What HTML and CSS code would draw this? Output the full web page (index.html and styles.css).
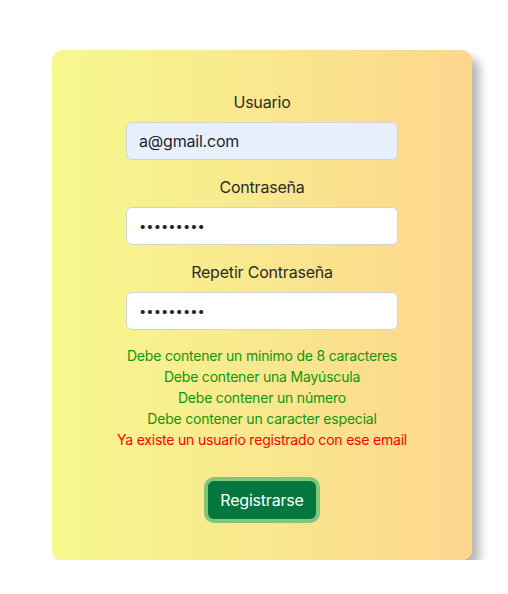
FILE: index.html
```html
<!DOCTYPE html>
<html lang="es">
<head>
<meta charset="utf-8">
<title>Registro</title>
<link rel="stylesheet" href="styles.css">
</head>
<body>
<main class="page">
  <form class="card">
    <div class="field">
      <label class="label" for="u">Usuario</label>
      <input class="input autofill" id="u" type="text" value="a@gmail.com">
    </div>
    <div class="field">
      <label class="label" for="p1">Contraseña</label>
      <input class="input" id="p1" type="password" value="123456789">
    </div>
    <div class="field">
      <label class="label" for="p2">Repetir Contraseña</label>
      <input class="input" id="p2" type="password" value="123456789">
    </div>
    <ul class="messages">
      <li class="ok">Debe contener un minimo de 8 caracteres</li>
      <li class="ok">Debe contener una Mayúscula</li>
      <li class="ok">Debe contener un número</li>
      <li class="ok">Debe contener un caracter especial</li>
      <li class="err">Ya existe un usuario registrado con ese email</li>
    </ul>
    <button class="btn" type="button">Registrarse</button>
  </form>
</main>
</body>
</html>
```

FILE: styles.css
```css
* { box-sizing: border-box; }
html, body { margin: 0; padding: 0; background: #fff; }
body {
  font-family: Inter, "Noto Sans", sans-serif;
  color: #212529;
  font-size: 16px;
  line-height: 1.5;
  letter-spacing: -0.2px;
}
.page {
  padding: 50px 0 0 52px;
}
.card {
  width: 420px;
  padding: 40px 0 41px;
  border-radius: 10px;
  background: linear-gradient(to right, #f6f98e, #fdd68e);
  box-shadow: 8px 8px 10px rgba(0, 0, 0, 0.28);
  display: flex;
  flex-direction: column;
  align-items: center;
}
.field {
  width: 272px;
  display: flex;
  flex-direction: column;
  align-items: center;
  margin-bottom: 15px;
}
.label {
  display: block;
  margin-bottom: 8px;
  font-size: 16px;
  line-height: 24px;
  color: #2b2b2b;
}
.input {
  width: 272px;
  height: 38px;
  padding: 6px 12px;
  border: 1px solid #cfd4da;
  border-radius: 6px;
  background: #fff;
  font-family: Inter, "Noto Sans", sans-serif;
  font-size: 16px;
  letter-spacing: -0.2px;
  color: #212529;
  outline: none;
}
.input[type=password] { font-size: 13px; letter-spacing: 0; }
.autofill { background: #e8f0fe; }
.messages {
  list-style: none;
  margin: 0;
  padding: 0;
  text-align: center;
  font-size: 14px;
  line-height: 21px;
}
.ok { color: #0f960f; }
.err { color: #ff0000; }
.btn {
  margin-top: 31px;
  height: 38px;
  padding: 0 12px;
  border: none;
  border-radius: 6px;
  background: #04773f;
  color: #fff;
  font-family: Inter, "Noto Sans", sans-serif;
  font-size: 16px;
  letter-spacing: -0.2px;
  box-shadow: 0 0 0 4px #80c67b;
}
```
